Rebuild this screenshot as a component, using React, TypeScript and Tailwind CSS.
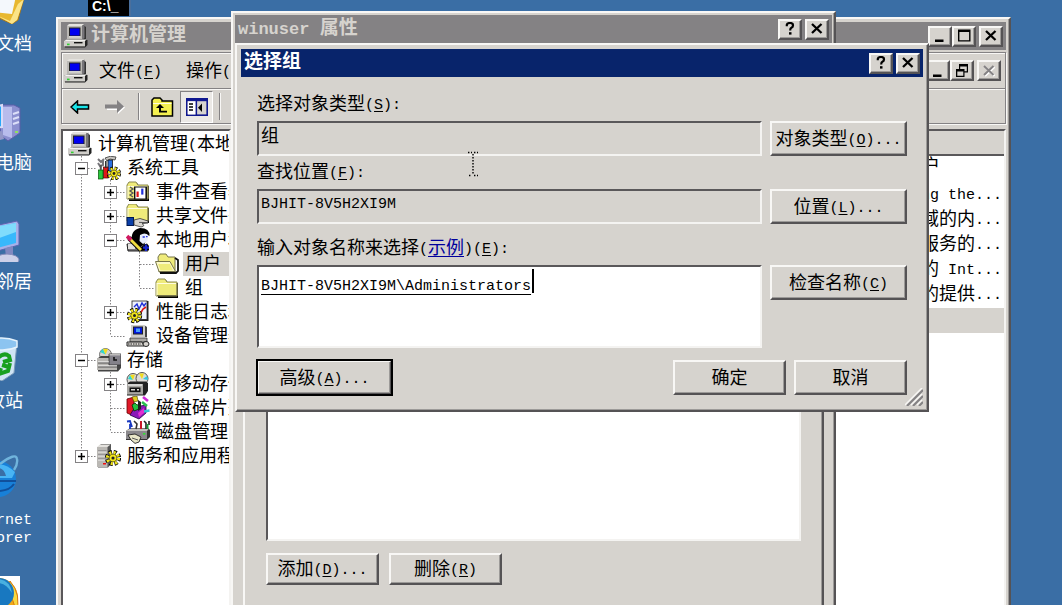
import { useState } from "react";
import type { ReactNode } from "react";

const FONT = "font-['Liberation_Mono','Noto_Sans_CJK_SC',monospace]";

const RAISED =
  "border-2 border-t-[#f8f7f5] border-l-[#f8f7f5] border-b-[#555355] border-r-[#555355] shadow-[inset_-1px_-1px_0_#9c9a98] bg-[#d6d3ce]";
const SUNKEN =
  "border-2 border-t-[#5a585a] border-l-[#5a585a] border-b-[#f4f3f1] border-r-[#f4f3f1]";

// "&F" marks the accelerator letter, which is underlined
function Txt({ text, bold = false }: { text: string; bold?: boolean }) {
  const parts = text.split(/([ -~]+)/).filter(Boolean);
  return (
    <span className="whitespace-pre">
      {parts.map((part, i) => {
        if (!/^[ -~]/.test(part)) {
          return <span key={i} className={bold ? "text-[19px] font-bold" : "text-[18px]"}>{part}</span>;
        }
        const m = part.match(/^([^&]*)&(.)(.*)$/);
        return (
          <span key={i} className={bold ? "text-[17px] font-bold" : "align-[1px] text-[15px] leading-4"}>
            {m ? <>{m[1]}<u className="underline-offset-2">{m[2]}</u>{m[3]}</> : part}
          </span>
        );
      })}
    </span>
  );
}

function PushButton({ text, className = "", isDefault = false }: { text: string; className?: string; isDefault?: boolean }) {
  return (
    <button
      type="button"
      className={`flex items-center justify-center pt-[3px] leading-6 text-black ${RAISED} ${isDefault ? "outline-2 -outline-offset-1 outline-black" : ""} ${className}`}
    >
      <Txt text={text} />
    </button>
  );
}

function CaptionButton({ label, children }: { label: string; children: ReactNode }) {
  return (
    <button type="button" aria-label={label} className={`flex h-[21px] w-6 items-center justify-center ${RAISED}`}>
      <svg viewBox="0 0 16 14" className="h-3.5 w-4">{children}</svg>
    </button>
  );
}

const closeGlyph = <path d="M3 2 L12.5 11 M12.5 2 L3 11" stroke="#000" strokeWidth="2.3" fill="none" />;
const helpGlyph = (
  <>
    <path d="M4.8 4.2 V2.8 Q5.2 1 8 1 Q11 1 11 3.4 Q11 5 9.4 5.8 Q8.2 6.4 8.2 8.4" stroke="#000" strokeWidth="2.2" fill="none" />
    <rect x="7" y="10.2" width="2.5" height="2.4" />
  </>
);
const minGlyph = <rect x="3" y="10.5" width="8.5" height="2.5" />;
const maxGlyph = <path d="M2 0.5 H14.5 V12.5 H2 Z M3.4 3.1 V11.2 H13.1 V3.1 Z" fillRule="evenodd" />;
const restoreGlyph = (
  <path d="M5 0 H14 V8.5 H10.5 V13 H2 V5 H5 Z M6.2 2.4 V5 H10.5 V7.3 H12.8 V2.4 Z M3.3 7.4 V11.7 H9.3 V7.4 Z" fillRule="evenodd" />
);
const closeOffGlyph = (
  <>
    <path d="M4 3 L13.5 12 M13.5 3 L4 12" stroke="#fff" strokeWidth="2" fill="none" />
    <path d="M3 2 L12.5 11 M12.5 2 L3 11" stroke="#848284" strokeWidth="2" fill="none" />
  </>
);

function Gear({ x, y, s = 1 }: { x: number; y: number; s?: number }) {
  return (
    <g transform={`translate(${x} ${y}) scale(${s})`}>
      <circle r="5.4" fill="none" stroke="#000" strokeWidth="4.6" strokeDasharray="2.6 1.64" />
      <circle r="3.8" fill="#f0e41c" stroke="#111" strokeWidth=".6" />
      <circle r="5.3" fill="none" stroke="#f0e41c" strokeWidth="3" strokeDasharray="2 2.16" />
      <circle r="1.5" fill="#222" />
    </g>
  );
}

function Folder({ x = 0, y = 0 }: { x?: number; y?: number }) {
  return (
    <g transform={`translate(${x} ${y})`}>
      <path d="M2 6 L4 3 H10 L12 6 H22 V21 H2 Z" fill="#000" transform="translate(1 1)" />
      <path d="M1 6 L3 3 H10 L12 6 H22 V20 H1 Z" fill="#efeb7b" stroke="#8a8850" />
      <path d="M2 7.5 H21 M2 7 V19.5" stroke="#fffde0" />
      <path d="M2 19.5 H22 V7" fill="none" stroke="#77754a" />
    </g>
  );
}

function Computer() {
  return (
    <>
      <path d="M5 1 H19 L22 3 V15 L20 17 H5 Z" fill="#333" />
      <path d="M3 2 L5 0 H20 L18 2 V15 H3 Z" fill="#e4e2de" />
      <rect x="3" y="2" width="15.5" height="13.5" fill="#bab8b4" />
      <path d="M18.5 2 L20.5 .6 V14 L18.5 15.5 Z" fill="#77757a" />
      <rect x="5.5" y="4" width="10.5" height="8" fill="#0000f0" stroke="#222" />
      <path d="M5 12.8 H16.6" stroke="#fff" />
      <path d="M0 17 L3 15.4 H21 L23.5 16 V21 L21 23.5 H1 Z" fill="#222" />
      <path d="M0 17 H21 V22.4 H0 Z" fill="#cfcdc9" />
      <path d="M0 17 L2.5 15.4 H22.5 L21 17 Z" fill="#f4f3f1" />
      <rect x="10" y="18" width="8.5" height="1.4" fill="#111" />
      <rect x="3" y="19.6" width="2.6" height="1.6" fill="#31d131" />
    </>
  );
}

type IconName =
  | "computer" | "tools" | "events" | "share" | "users" | "open" | "folder"
  | "perf" | "device" | "storage" | "removable" | "defrag" | "disk" | "services";

const ICONS: Record<IconName, ReactNode> = {
  computer: <Computer />,
  tools: (
    <>
      <path d="M8 2 Q13 -1 19 1 L18 4 L13 3 L10 5 Z" fill="#c8c6c2" stroke="#333" strokeWidth=".8" />
      <path d="M1 3 L4 6 L7 3 M6 4 V9 L3 10 L1 7" stroke="#77757a" strokeWidth="2" fill="none" />
      <rect x="11" y="4" width="4.5" height="12" fill="#2a6fe0" stroke="#111" strokeWidth=".8" />
      <rect x="6.5" y="11" width="4.5" height="11" fill="#e01818" stroke="#500" strokeWidth=".7" />
      <path d="M8.8 5 V12" stroke="#333" strokeWidth="1.6" />
      <rect x="1.5" y="14" width="4.5" height="9" fill="#28c83c" stroke="#050" strokeWidth=".7" />
      <path d="M3.8 9 V14" stroke="#555" strokeWidth="2" />
      <Gear x={17} y={17.5} s={0.92} />
    </>
  ),
  events: (
    <>
      <Folder y={-1} />
      <rect x="8" y="6.5" width="13" height="13" fill="#111" />
      <rect x="9.4" y="7.5" width="10" height="11" fill="#fff" />
      <rect x="10.5" y="11.5" width="2.2" height="5.5" fill="#e01818" />
      <rect x="15.2" y="8.6" width="2.2" height="6" fill="#2030d8" />
      <path d="M4 7 L7 9 L4 11 L7 13 L4 15 L7 17" stroke="#555" fill="none" strokeWidth="1.3" />
    </>
  ),
  share: (
    <>
      <Folder y={-3} />
      <rect x="1" y="13.5" width="6.5" height="8" fill="#0a3fa8" stroke="#001850" />
      <path d="M8 16 L14 14.5 L22 17 L22 19 L16 19.6 Q20 22 15 23 L8 21 Z" fill="#d6d3ce" stroke="#333" strokeWidth=".8" />
      <path d="M13 18.4 L22 18.6" stroke="#555" />
    </>
  ),
  users: (
    <>
      <path d="M1 16 H19 L22 19 V23 H2 Z" fill="#77757a" stroke="#222" />
      <path d="M2 16 H9 V21 H2 Z" fill="#e4e2de" />
      <path d="M6 14 Q4 2 14 0 Q24 0 23.5 8 L20 6 V13 Q17 20 11 18 Z" fill="#000" />
      <path d="M14 7 Q19 4 22 7 L21.5 13 L17 16 L13.5 13 Z" fill="#e8eefc" />
      <path d="M16.6 9 H18.8 M20 8.6 H21.6" stroke="#2030d8" strokeWidth="1.4" />
      <path d="M14 23 Q15 17 21 15.5 L23 18 V22 Z" fill="#000" />
      <path d="M3 10 L15 22" stroke="#000" strokeWidth="4.6" />
      <path d="M3 10 L15 22" stroke="#f0dc40" strokeWidth="2.8" />
      <path d="M1 8.2 L5 12" stroke="#d01860" strokeWidth="3.8" />
      <path d="M20 16.5 V23 M17 19.7 H23" stroke="#1828d0" strokeWidth="2.2" />
    </>
  ),
  open: (
    <>
      <path d="M3 5 L5 2 H11 L13 5 H20 V20 H4 Z" fill="#efeb7b" stroke="#77754a" />
      <path d="M20 6 L23 8 V19 L21 21 H5" fill="none" stroke="#111" strokeWidth="1.8" />
      <path d="M0.5 9.5 H15 L20.5 19.5 H4 Z" fill="#fbf9c8" stroke="#77754a" />
      <path d="M3 12 H15 L18 18.5 H5.5 Z" fill="#efeb7b" />
    </>
  ),
  folder: <Folder />,
  perf: (
    <>
      <rect x="6" y="1" width="16.5" height="20" fill="#222" />
      <rect x="6" y="1" width="15" height="18.5" fill="#eef2fc" stroke="#222" strokeWidth=".8" />
      <path d="M8 7 L11 4 L13 9 L16 3 L18 6 L20 3" stroke="#2030d8" strokeWidth="1.4" fill="none" />
      <path d="M14 14 L17 9 L20 7" stroke="#e01818" strokeWidth="1.6" fill="none" />
      <Gear x={8.5} y={15.5} s={1} />
    </>
  ),
  device: (
    <>
      <path d="M6 1 H18 L21 3 V13 H6 Z" fill="#444" />
      <rect x="5" y="1" width="14" height="12" fill="#cfcdc9" />
      <rect x="7.5" y="3" width="9" height="7" fill="#0018e0" stroke="#222" />
      <rect x="10" y="4.5" width="4" height="3.5" fill="#4aa0f8" />
      <path d="M4 14 H21 V18 H4 Z" fill="#a8a6a2" stroke="#333" strokeWidth=".8" />
      <path d="M1 18 H16 L18 22 H1 Z" fill="#d6d3ce" stroke="#222" />
      <path d="M2 20 H15" stroke="#222" strokeDasharray="1.5 1" />
      <ellipse cx="20" cy="20" rx="3" ry="2.5" fill="#d6d3ce" stroke="#222" />
    </>
  ),
  storage: (
    <>
      <circle cx="8.5" cy="6.5" r="6" fill="#d6d3ce" stroke="#555" strokeWidth=".8" />
      <path d="M8.5 6.5 L3 4 L6 .8 Z" fill="#30d8d0" />
      <path d="M8.5 6.5 L6 .8 L11 1 Z" fill="#f0dc20" />
      <path d="M1 10 L4 8 H20 L24 6 V20 L21 23.5 H1 Z" fill="#444" />
      <path d="M0 10 H20 V22 H0 Z" fill="#bab8b4" />
      <path d="M12 6 H24 V17 H12 Z" fill="#84828a" stroke="#333" strokeWidth=".8" />
      <path d="M12.5 6.8 H23.4" stroke="#e4e2de" />
      <path d="M17 9 V12 H20" stroke="#111" strokeWidth="1.6" fill="none" />
      <path d="M1 14 H12 M1 18 H20" stroke="#fff" />
      <path d="M1 15 H12 M1 19 H20" stroke="#555" />
    </>
  ),
  removable: (
    <>
      <circle cx="7" cy="7.5" r="6" fill="#dcdad6" stroke="#444" strokeWidth=".9" />
      <circle cx="16" cy="6.5" r="6" fill="#dcdad6" stroke="#444" strokeWidth=".9" />
      <path d="M7 8 L2 7 L4 3 Z" fill="#30d8d0" />
      <path d="M7 8 L4 3 L9 2.6 Z" fill="#f0dc20" />
      <path d="M16 7 L13 1.6 L18 1.4 Z" fill="#f0dc20" />
      <path d="M17 7 L21 4 L22 8 Z" fill="#30c8e8" />
      <path d="M1 12 L4 9.5 H20 L22 11 V19 L19 23.5 H1 Z" fill="#222" />
      <path d="M1 12 H17 V22.5 H1 Z" fill="#a8a6a2" />
      <path d="M2 13 H16" stroke="#fff" />
      <rect x="3.5" y="15.5" width="11" height="4.6" fill="#111" />
      <path d="M5 17.8 H9 M11 17.8 H13" stroke="#dcdad6" strokeWidth="1.4" />
    </>
  ),
  defrag: (
    <>
      <path d="M1 3 L8 1 V20 L1 17 Z" fill="#e01828" stroke="#600" strokeWidth=".8" />
      <path d="M4 19 L13 23 L20 17 V9 L9 11 Z" fill="#8a18b8" stroke="#204" strokeWidth=".8" />
      <path d="M12 17 L18 12 V17 L13 21 Z" fill="#e030d0" />
      <path d="M6 9 L9 7 L11 9 L14 8 L13 13 L8 15 Z" fill="#20c040" stroke="#030" strokeWidth=".8" />
      <path d="M6 1 L11 0 L12 5 L8 6 Z" fill="#e0cc20" stroke="#440" strokeWidth=".6" />
      <path d="M12 8 L12 4 L15 6 V13 L12 15 Z" fill="#222" />
      <path d="M17 1 L22 5" stroke="#d028d8" strokeWidth="2.6" />
      <path d="M16 6 L21 10" stroke="#28c050" strokeWidth="2.6" />
      <path d="M18 15.5 L23.5 14.5" stroke="#30c8d8" strokeWidth="2.4" />
    </>
  ),
  disk: (
    <>
      <path d="M0 11 L4 8 H22 L24 10 V17 L21 20 H0 Z" fill="#333" />
      <path d="M0 11 H21 V19 H0 Z" fill="#8a888c" />
      <path d="M0 11 L4 8.6 H23 L21 11 Z" fill="#c4c2be" />
      <path d="M1 1.5 L4 1 L6 7 M4 9 V4" stroke="#1838c0" strokeWidth="1.8" fill="none" />
      <path d="M8 1 L11 4 L10 9" stroke="#333" strokeWidth="1.6" fill="none" />
      <path d="M15 1 V9" stroke="#c81828" strokeWidth="2" />
      <path d="M18 1 L20 3 V9 M23 1 V5" stroke="#222" strokeWidth="1.6" fill="none" />
      <path d="M21.6 4 V9" stroke="#18a038" strokeWidth="1.8" />
      <rect x="17" y="13" width="2.4" height="1.6" fill="#31e131" />
      <path d="M2 15 L9 14 L15 17 L13 22 L9 23.4 L5 20 Z" fill="#e8e6c8" stroke="#222" strokeWidth=".9" />
      <path d="M6 18 L12 20" stroke="#555" />
    </>
  ),
  services: (
    <>
      <path d="M1 3 L4 0 H14 V20 L11 23.5 H1 Z" fill="#555" />
      <path d="M0 3 H10.5 V23 H0 Z" fill="#bab8b4" />
      <path d="M0 3 L3 .4 H13.6 L10.5 3 Z" fill="#e4e2de" />
      <path d="M1 7 H9.5 M1 11 H9.5 M1 15 H9.5" stroke="#77757a" />
      <path d="M1 8 H9.5 M1 12 H9.5 M1 16 H9.5" stroke="#f0efed" />
      <rect x="6" y="19" width="3" height="1.5" fill="#f01010" />
      <Gear x={16} y={14} s={1.05} />
    </>
  ),
};

function Icon({ name, className = "" }: { name: IconName; className?: string }) {
  return <svg viewBox="0 0 24 24" className={`h-6 w-6 shrink-0 ${className}`}>{ICONS[name]}</svg>;
}

// tree gutters: v = line, t = line with branch, l = last branch, + / - = box, p = last box
type TreeRow = { gutters: string; icon: IconName; text: string; selected?: boolean };

const TREE: TreeRow[] = [
  { gutters: "", icon: "computer", text: "计算机管理(本地" },
  { gutters: "-", icon: "tools", text: "系统工具" },
  { gutters: "v+", icon: "events", text: "事件查看器" },
  { gutters: "v+", icon: "share", text: "共享文件夹" },
  { gutters: "v-", icon: "users", text: "本地用户和" },
  { gutters: "vvt", icon: "open", text: "用户", selected: true },
  { gutters: "vvl", icon: "folder", text: "组" },
  { gutters: "v+", icon: "perf", text: "性能日志和" },
  { gutters: "vl", icon: "device", text: "设备管理器" },
  { gutters: "-", icon: "storage", text: "存储" },
  { gutters: "v+", icon: "removable", text: "可移动存储" },
  { gutters: "vt", icon: "defrag", text: "磁盘碎片整" },
  { gutters: "vl", icon: "disk", text: "磁盘管理" },
  { gutters: "p", icon: "services", text: "服务和应用程" },
];

function Gutter({ kind }: { kind: string }) {
  const half = kind === "l" || kind === "p";
  const box = kind === "+" || kind === "-" || kind === "p";
  return (
    <svg viewBox="0 0 29 24" className="h-6 w-[29px] shrink-0">
      <path d={half ? "M14.5 0 V12" : "M14.5 0 V24"} stroke="#848284" strokeDasharray="1.5 1.5" />
      {kind !== "v" && <path d="M15 12.5 H30" stroke="#848284" strokeDasharray="1.5 1.5" />}
      {box && (
        <>
          <rect x="8.5" y="6.5" width="12" height="12" fill="#fff" stroke="#848284" />
          <path d={kind === "-" ? "M11 12.5 H18" : "M11 12.5 H18 M14.5 9 V16"} stroke="#000" strokeWidth="1.5" />
        </>
      )}
    </svg>
  );
}

function Tree() {
  return (
    <ul className="pl-1">
      {TREE.map((row) => (
        <li key={row.text} className="flex h-6 items-start leading-[26px]">
          {row.gutters.split("").map((g, i) => <Gutter key={i} kind={g} />)}
          <Icon name={row.icon} className="mr-1 ml-px" />
          <span className={`h-6 pl-0.5 ${row.selected ? "w-12 bg-[#d6d3ce]" : ""}`}><Txt text={row.text} /></span>
        </li>
      ))}
    </ul>
  );
}

const DESCRIPTIONS = ["ng the...", "域的内...", "服务的...", "的 Int...", "的提供..."];

function ManagementWindow() {
  return (
    <section className={`absolute top-[17px] right-[51px] -bottom-2 left-14 flex flex-col p-[3px] ${RAISED}`}>
      <header className="flex h-7 shrink-0 items-center bg-[#848284] px-[3px] text-[#d6d3ce]">
        <Icon name="computer" className="mr-[3px]" />
        <h1 className="flex-1 leading-[30px]"><Txt text="计算机管理" bold /></h1>
        <CaptionButton label="最小化">{minGlyph}</CaptionButton>
        <CaptionButton label="最大化">{maxGlyph}</CaptionButton>
        <div className="w-[3px]" />
        <CaptionButton label="关闭">{closeGlyph}</CaptionButton>
      </header>

      <div className="mt-0.5 shrink-0 border border-[#848284] shadow-[inset_1px_1px_0_#f8f7f5,1px_1px_0_#f8f7f5]">
        <nav className="flex h-9 items-center border-b border-[#848284] pr-1 pl-0.5">
          <Icon name="computer" className="mr-[11px]" />
          <button type="button" className="mr-6 pt-[3px] leading-6"><Txt text="文件(&F)" /></button>
          <button type="button" className="pt-[3px] leading-6"><Txt text="操作(" /></button>
          <div className="flex-1" />
          <CaptionButton label="最小化子窗口">{minGlyph}</CaptionButton>
          <CaptionButton label="还原子窗口">{restoreGlyph}</CaptionButton>
          <div className="w-[3px]" />
          <CaptionButton label="关闭子窗口">{closeOffGlyph}</CaptionButton>
        </nav>
        <div className="flex h-[34px] items-center border-t border-[#f8f7f5] pl-2">
          <button type="button" aria-label="后退" className="mr-[15px]">
            <svg viewBox="0 0 20 14" className="h-3.5 w-5">
              <path d="M1 7 L7.5 1 V5 H18.5 V9 H7.5 V13 Z" fill="#18e4e8" stroke="#000" strokeWidth="1.5" />
            </svg>
          </button>
          <button type="button" aria-label="前进" className="mr-[13px]">
            <svg viewBox="0 0 20 16" className="h-4 w-5">
              <path d="M2 6.5 H13 V2 L20 8.5 L13 15 V11 H2 Z" fill="#fff" />
              <path d="M0 5.5 H12 V1 L19 7.5 L12 14 V9.5 H0 Z" fill="#848284" />
            </svg>
          </button>
          <div className="mr-2.5 h-[27px] w-0.5 border-l border-[#848284] bg-[#f8f7f5]" />
          <button type="button" aria-label="向上" className="mr-1.5">
            <svg viewBox="0 0 24 20" className="h-5 w-6">
              <path d="M2 5 V3 L4 1 H10 L12 3 V4 H22.5 V19 H2 Z" fill="#f4f050" stroke="#000" strokeWidth="1.5" />
              <path d="M3 6.5 H21.5" stroke="#fffde0" />
              <path d="M10 7 L6 11 H9 V15.5 H17 V13.8 H11 V11 H14 Z" />
            </svg>
          </button>
          <button type="button" aria-label="显示控制台树" className="flex h-8 w-[33px] items-center justify-center border border-t-[#848284] border-r-white border-b-white border-l-[#848284] bg-[#ebe9e6]">
            <svg viewBox="0 0 22 18" className="h-[18px] w-[22px]">
              <rect x=".8" y=".8" width="20.4" height="16.4" fill="#d6d3ce" stroke="#101890" strokeWidth="1.6" />
              <rect x="0" y="0" width="22" height="3.2" fill="#101890" />
              <rect x="1.8" y="3.4" width="8" height="13" fill="#fff" />
              <path d="M3 6 H7 M3 9 H7 M3 12 H7" stroke="#000" strokeWidth="1.4" />
              <rect x="9.6" y="3" width="1.5" height="14" fill="#101890" />
              <path d="M16 5.5 V14 L12 9.8 Z" />
            </svg>
          </button>
          <div className="ml-1.5 h-[27px] w-0.5 border-l border-[#848284] bg-[#f8f7f5]" />
        </div>
      </div>

      <div className="mt-[5px] flex min-h-0 flex-1">
        <div className={`w-[170px] shrink-0 overflow-hidden bg-white pt-px ${SUNKEN}`}><Tree /></div>
        <div className={`flex-1 overflow-hidden bg-white ${SUNKEN}`}>
          <table className="w-full">
            <thead>
              <tr className="h-6 border-b-2 border-[#5a585a] bg-[#d6d3ce]"><th aria-label="描述" className="p-0" /></tr>
            </thead>
            <tbody className="text-right leading-[22px]">
              <tr className="h-7"><td className="p-0 pr-16 align-top"><Txt text="户" /></td></tr>
              {DESCRIPTIONS.map((d) => (
                <tr key={d} className="h-[25px]"><td className="p-0 pr-0.5 whitespace-nowrap"><Txt text={d} /></td></tr>
              ))}
              <tr className="h-[25px] bg-[#d6d3ce]"><td className="p-0" /></tr>
            </tbody>
          </table>
        </div>
      </div>
    </section>
  );
}

function PropertiesDialog() {
  return (
    <section className={`absolute top-[11px] left-[231px] flex w-[605px] flex-col p-0.5 ${RAISED}`}>
      <header className="flex h-7 items-center bg-[#848284] px-[3px] text-[#d6d3ce]">
        <h2 className="flex-1 leading-[30px]"><Txt text="winuser 属性" bold /></h2>
        <CaptionButton label="帮助">{helpGlyph}</CaptionButton>
        <div className="w-[3px]" />
        <CaptionButton label="关闭">{closeGlyph}</CaptionButton>
      </header>
      <div className={`mx-2 mt-8 px-[21px] pb-10 ${RAISED}`}>
        <ul aria-label="隶属于" className={`h-[464px] bg-white ${SUNKEN}`} />
        <div className="mt-3 flex gap-2.5">
          <PushButton text="添加(&D)..." className="h-8 w-[113px]" />
          <PushButton text="删除(&R)" className="h-8 w-[113px]" />
        </div>
      </div>
    </section>
  );
}

function SelectGroupDialog() {
  const [names, setNames] = useState("BJHIT-8V5H2XI9M\\Administrators");

  return (
    <section className={`absolute top-[43px] left-[235px] w-[694px] p-1 ${RAISED}`}>
      <header className="flex h-7 items-center bg-[#08246b] px-[3px] text-white">
        <h2 className="flex-1 leading-[30px]"><Txt text="选择组" bold /></h2>
        <CaptionButton label="帮助">{helpGlyph}</CaptionButton>
        <div className="w-[3px]" />
        <CaptionButton label="关闭">{closeGlyph}</CaptionButton>
      </header>

      <form className="px-4 pt-[15px] pb-[11px] leading-[26px]">
        <label htmlFor="object-type" className="mb-[5px] block h-6"><Txt text="选择对象类型(&S):" /></label>
        <div className="flex gap-2">
          <input id="object-type" readOnly value="组" className={`h-[35px] min-w-0 flex-1 bg-[#d6d3ce] px-0.5 pb-2.5 text-[18px] ${SUNKEN}`} />
          <PushButton text="对象类型(&O)..." className="h-[35px] w-[137px]" />
        </div>

        <label htmlFor="location" className="mt-1 mb-[5px] block h-6"><Txt text="查找位置(&F):" /></label>
        <div className="flex gap-2">
          <input id="location" readOnly value="BJHIT-8V5H2XI9M" className={`h-[35px] min-w-0 flex-1 bg-[#d6d3ce] px-0.5 pb-1 text-[15px] ${SUNKEN}`} />
          <PushButton text="位置(&L)..." className="h-[35px] w-[137px]" />
        </div>

        <div className="mt-3 mb-[5px] h-6">
          <label htmlFor="names"><Txt text="输入对象名称来选择" /></label>
          <Txt text="(" />
          <a href="#examples" className="text-[#00009c] underline underline-offset-2"><Txt text="示例" /></a>
          <label htmlFor="names"><Txt text=")(&E):" /></label>
        </div>
        <div className="flex items-start gap-2">
          <div className="relative flex min-w-0 flex-1">
            <textarea
              id="names"
              value={names}
              onChange={(e) => setNames(e.target.value)}
              spellCheck={false}
              className={`h-[83px] w-full resize-none bg-white px-0.5 pt-2 text-[15px] leading-6 underline underline-offset-4 ${SUNKEN}`}
            />
            <span className="absolute top-1 left-[275px] h-6 w-0.5 bg-black" />
          </div>
          <PushButton text="检查名称(&C)" className="h-[35px] w-[137px]" />
        </div>

        <div className="mt-3 flex">
          <PushButton text="高级(&A)..." className="h-[35px] w-[135px]" isDefault />
          <div className="flex-1" />
          <PushButton text="确定" className="mr-2 h-[35px] w-[113px]" />
          <PushButton text="取消" className="h-[35px] w-[113px]" />
        </div>
      </form>

      <svg viewBox="0 0 18 18" className="absolute right-1 bottom-1 h-[18px] w-[18px]">
        <path d="M0 17 L17 0 M6 17 L17 6 M12 17 L17 12" stroke="#f8f7f5" strokeWidth="1.5" />
        <path d="M2 18 L18 2 M8 18 L18 8 M14 18 L18 14" stroke="#848284" strokeWidth="2" />
      </svg>
    </section>
  );
}

const SHORTCUTS: { label: string; art: ReactNode }[] = [
  {
    label: "我的文档",
    art: (
      <>
        <path d="M18 8 L40 20 L48 22 L42 44 L36 48 L14 38 Z" fill="#e8b830" stroke="#a87818" />
        <path d="M20 14 L40 20 L36 38 L18 36 Z" fill="#f4f8fc" />
        <path d="M18 38 L34 45 L42 28 L48 23 L41 44 L36 48 Z" fill="#fbe488" />
      </>
    ),
  },
  {
    label: "我的电脑",
    art: (
      <>
        <path d="M26 10 L38 10 L44 13 V38 L32 46 L24 40 Z" fill="#8c90d0" stroke="#5a5ea8" />
        <path d="M27 12 L36 12 V43 L27 40 Z" fill="#b8bcec" />
        <path d="M37 19 L43 17 M37 24 L43 22 M37 29 L43 27" stroke="#dcdff8" strokeWidth="2" />
        <path d="M8 14 L26 10 V32 L8 34 Z" fill="#28a8f8" stroke="#d8dcf8" strokeWidth="2" />
        <path d="M14 38 L26 36 L28 44 L16 47 Z" fill="#9498c8" />
        <rect x="39" y="36" width="3" height="2" fill="#90e060" />
      </>
    ),
  },
  {
    label: "网上邻居",
    art: (
      <>
        <path d="M18 12 L41 7 L43 10 V31 L18 38 Z" fill="#a8b0e8" stroke="#5a64b0" />
        <path d="M18 13 L40 9 V29 L18 35 Z" fill="#38b8fc" />
        <path d="M18 13 L40 9 V18 L18 26 Z" fill="#80dcfc" />
        <path d="M29 34 L37 32 L37 41 L30 43 Z" fill="#8088c0" />
        <ellipse cx="31" cy="46" rx="12" ry="6" fill="#ccd0e8" stroke="#8088b8" />
      </>
    ),
  },
  {
    label: "回收站",
    art: (
      <>
        <path d="M10 8 L41 10 L38 40 L26 48 L12 44 Z" fill="#cfe4f4" stroke="#7898b8" />
        <path d="M10 8 Q26 2 41 8 L41 14 Q28 20 10 14 Z" fill="#8cc4f0" stroke="#e4f2fc" strokeWidth="1.5" />
        <path d="M22 25 Q28 19 33 23 L34 27 L27 29 M34 30 L32 38 L23 41 L25 35 M26 32 L33 34" stroke="#18a020" strokeWidth="4" fill="none" />
      </>
    ),
  },
  {
    label: "Internet Explorer",
    art: (
      <>
        <circle cx="22" cy="27" r="18" fill="#1880d8" />
        <path d="M6 22 Q22 4 39 20 L36 26 H10 Z" fill="#48b4f4" />
        <path d="M14 24 H30 Q28 16 22 16 Q16 16 14 24 Z" fill="#3a6ea5" />
        <path d="M14 29 H40 M24 39 Q34 38 38 32" stroke="#10509c" strokeWidth="2" fill="none" />
        <path d="M24 12 Q40 0 41 7 Q42 12 38 18" stroke="#70b4dc" strokeWidth="2.4" fill="none" />
      </>
    ),
  },
  {
    label: "",
    art: (
      <>
        <rect x="0" y="5" width="44" height="43" fill="#fff" />
        <circle cx="22" cy="27" r="20" fill="#f0a818" />
        <path d="M34 10 Q46 24 40 42 Q38 28 32 22 Z" fill="#f8d840" stroke="#d87810" />
        <circle cx="23" cy="22" r="15" fill="#1878c0" />
        <path d="M22 8 Q34 9 36 22 Q30 12 22 12 Z" fill="#48b0e0" />
      </>
    ),
  },
];

function DesktopShortcuts() {
  return (
    <ul className="absolute -top-6 -left-10 w-[72px] text-white">
      {SHORTCUTS.map((s) => (
        <li key={s.label} className="flex h-[119px] flex-col items-center">
          <svg viewBox="0 0 48 48" className="ml-2 h-12 w-12 shrink-0">{s.art}</svg>
          <span className="mt-3 text-center leading-[18px]">
            {s.label.split(" ").map((line) => <span key={line} className="block"><Txt text={line} /></span>)}
          </span>
        </li>
      ))}
    </ul>
  );
}

export default function App() {
  return (
    <main className={`relative h-screen w-full overflow-hidden bg-[#3a6ea5] text-black ${FONT}`}>
      <DesktopShortcuts />
      <div className="absolute top-0 left-[88px] h-4 w-[43px] border-r-2 border-[#4a6f9c] bg-black pl-1 font-['Liberation_Sans',sans-serif] text-sm leading-3 font-bold text-white">
        C:\_
      </div>
      <ManagementWindow />
      <PropertiesDialog />
      <SelectGroupDialog />
      <svg viewBox="0 0 12 26" className="absolute top-[151px] left-[467px] h-[26px] w-3">
        <path d="M1 1.5 H5 M7 1.5 H11 M6 3 V23 M2 24.5 H5 M7 24.5 H11" stroke="#000" strokeWidth="1.4" strokeDasharray="1.4 1.6" fill="none" />
      </svg>
    </main>
  );
}
